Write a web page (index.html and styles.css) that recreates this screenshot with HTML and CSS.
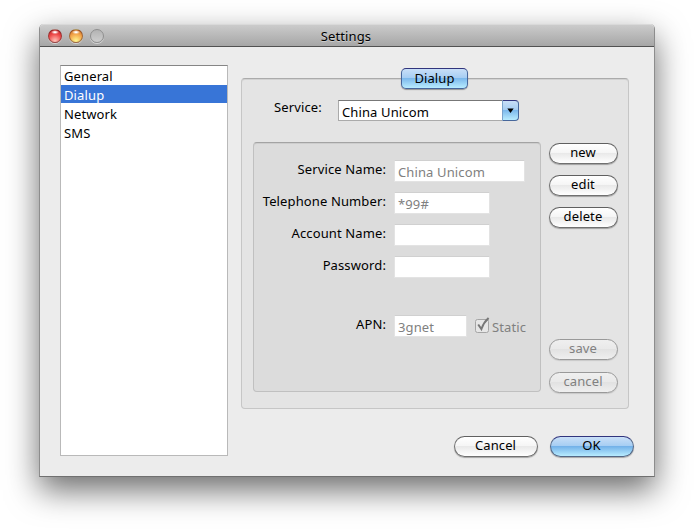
FILE: index.html
```html
<!DOCTYPE html>
<html lang="en">
<head>
<meta charset="utf-8">
<title>Settings</title>
<link rel="stylesheet" href="styles.css">
</head>
<body>
<main class="window">
  <header class="titlebar">
    <div class="lights"><i class="light red"></i><i class="light amber"></i><i class="light off"></i></div>
    <h1><span class="t-title">Settings</span></h1>
  </header>
  <div class="content">
    <ul class="sidebar">
      <li>General</li>
      <li class="selected">Dialup</li>
      <li>Network</li>
      <li>SMS</li>
    </ul>
    <div class="main">
      <section class="group">
        <div class="tab">Dialup</div>
        <div class="service">
          <span class="service-label">Service:</span>
          <div class="combo"><span class="combo-text">China Unicom</span><span class="combo-button"><svg width="7" height="6" viewBox="0 0 7 6"><path d="M0.3 0.5H6.7L3.5 5Z"/></svg></span></div>
        </div>
        <div class="details">
          <div class="form">
            <div class="row"><label>Service Name:</label><div class="field wide">China Unicom</div></div>
            <div class="row"><label>Telephone Number:</label><div class="field">*99#</div></div>
            <div class="row"><label>Account Name:</label><div class="field"></div></div>
            <div class="row"><label>Password:</label><div class="field"></div></div>
            <div class="row apn"><label>APN:</label><div class="field short">3gnet</div>
              <div class="check"><svg width="17" height="18" viewBox="0 0 17 18"><rect class="box" x="1.5" y="3.5" width="13" height="13" rx="2"/><path class="tick" d="M4.2 8.5L7.4 13Q9.6 6.5 14.6 2"/></svg><span>Static</span></div>
            </div>
          </div>
          <div class="actions">
            <button>new</button>
            <button>edit</button>
            <button>delete</button>
            <button class="save" disabled>save</button>
            <button class="revert" disabled>cancel</button>
          </div>
        </div>
      </section>
      <footer class="footer"><button>Cancel</button><button class="primary">OK</button></footer>
    </div>
  </div>
</main>
</body>
</html>
```

FILE: styles.css
```css
* { box-sizing: border-box; }
body {
  margin: 0;
  padding: 24px 39px 0;
  height: 531px;
  overflow: hidden;
  background: #fff;
  color: #000;
  font: 13px/19px "Noto Sans", "Open Sans", sans-serif;
  letter-spacing: .12px;
}
.window {
  width: 616px;
  height: 453px;
  border: 1px solid #8d8d8d;
  border-top: 0;
  border-bottom-color: #707070;
  border-radius: 5px 5px 0 0;
  background: #ececec;
  box-shadow: 0 13px 32px rgba(0, 0, 0, .58);
}
.titlebar {
  display: grid;
  grid-template-columns: 62px 1fr 64px;
  align-items: center;
  height: 23px;
  border-top: 1px solid #d9d9d9;
  border-bottom: 1px solid #515151;
  border-radius: 4px 4px 0 0;
  background: linear-gradient(#cbcbcb, #a6a6a6);
}
.lights { display: flex; gap: 7px; padding-left: 8px; }
.light {
  width: 14px;
  height: 14px;
  flex: none;
  border-radius: 50%;
  border: 1px solid rgba(70, 35, 30, .45);
  box-shadow: 0 1px 0 rgba(255, 255, 255, .5);
}
.red { background: radial-gradient(ellipse 4px 2px at 50% 18%, #fff 20%, transparent), radial-gradient(circle at 50% 90%, #ffb9b0 5%, #ed4a4a 55%, #b91d22); }
.amber { background: radial-gradient(ellipse 4px 2px at 50% 18%, #fff 20%, transparent), radial-gradient(circle at 50% 90%, #fff08a 5%, #f3a64b 55%, #c8651f); }
.off { border-color: #8f8f8f; background: linear-gradient(#b3b3b3, #cecece); }
h1 { margin: 0; text-align: center; font: inherit; line-height: 20px; }
.t-title { text-shadow: 0 1px 0 rgba(255, 255, 255, .4); }
.content { display: flex; padding: 18px 20px 0; }
.sidebar {
  width: 168px;
  height: 391px;
  flex: none;
  margin: 0;
  padding: 0;
  list-style: none;
  border: 1px solid #b9b9b9;
  border-top-color: #858585;
  background: #fff;
}
.sidebar li { height: 19px; padding-left: 3px; line-height: 21px; }
.sidebar .selected { height: 18px; margin-bottom: 1px; background: #3875d7; color: #fff; }
.main { width: 394px; margin-left: 13px; padding-top: 13px; }
.group {
  width: 388px;
  height: 331px;
  padding-top: 1px;
  border: 1px solid #c6c6c6;
  border-top-color: #ababab;
  border-radius: 4px;
  background: #e4e4e4;
  box-shadow: inset 0 1px 0 #d2d2d2;
}
.tab {
  width: 67px;
  height: 21px;
  margin: -12px 0 0 159px;
  border: 1px solid #46669c;
  border-top-color: #31347d;
  border-radius: 5px;
  background: linear-gradient(#c9dff7, #a5cdf3 48%, #7db9ec 50%, #b8ecff);
  box-shadow: 0 1px 1px rgba(0, 0, 0, .35);
  text-align: center;
  line-height: 19px;
}
.service { display: flex; height: 21px; margin-top: 11px; padding-left: 32px; }
.service-label { width: 64px; line-height: 15px; }
.combo { display: flex; width: 181px; height: 21px; }
.combo-text { width: 164px; padding-left: 3px; border: 1px solid #aaa; border-top-color: #777; border-right: 0; background: #fff; line-height: 22px; }
.combo-button {
  display: grid;
  place-items: center;
  width: 17px;
  border: 1px solid #47679b;
  border-top-color: #31347d;
  border-left-color: #7aa3cc;
  border-radius: 0 4px 4px 0;
  background: linear-gradient(#c9dff7, #a5cdf3 48%, #7db9ec 50%, #b8ecff);
}
.details { display: flex; gap: 8px; margin: 21px 0 0 11px; }
.form {
  width: 288px;
  height: 250px;
  padding-top: 17px;
  border: 1px solid #c0c0c0;
  border-top-color: #a3a3a3;
  border-radius: 4px;
  background: #dcdcdc;
  box-shadow: inset 0 1px 0 #cdcdcd;
}
.row { display: flex; height: 22px; margin-bottom: 10px; }
.row label { width: 132px; margin-right: 8px; text-align: right; line-height: 18px; white-space: nowrap; }
.field { width: 96px; padding-left: 3px; background: #fff; border: 1px solid #e3e3e3; border-top-color: #d0d0d0; color: #808080; line-height: 23px; }
.field.wide { width: 131px; }
.field.short { width: 73px; }
.row.apn { margin-top: 37px; }
.check { display: flex; margin-left: 7px; color: #808080; line-height: 24px; }
.check svg { margin: 1px 1px 0 0; }
.box { fill: #e6e6e6; stroke: #a5a5a5; }
.tick { fill: none; stroke: #777; stroke-width: 2; }
.actions { display: flex; flex-direction: column; gap: 11px; padding-top: 1px; }
button {
  width: 69px;
  height: 21px;
  padding: 0 1px 2px 0;
  border: 1px solid #707070;
  border-top-color: #606060;
  border-radius: 11px;
  background: linear-gradient(#fff, #f5f5f5 48%, #e9e9e9 50%, #fff);
  box-shadow: 0 1px 1px rgba(0, 0, 0, .3);
  color: #000;
  font: inherit;
  letter-spacing: inherit;
  line-height: 17px;
}
button:disabled { border-color: #999; background: linear-gradient(#efefef, #e9e9e9 48%, #e2e2e2 50%, #efefef); color: #808080; box-shadow: 0 1px 1px rgba(0, 0, 0, .12); }
.save { margin-top: 100px; }
.revert { margin-top: 1px; }
.footer { display: flex; justify-content: flex-end; gap: 12px; margin-top: 27px; }
.footer button { width: 84px; }
.footer .primary { border-color: #536786; border-top-color: #31347d; background: linear-gradient(#c9dff7, #a5cdf3 48%, #74b2e9 50%, #b8ecff); }
```
